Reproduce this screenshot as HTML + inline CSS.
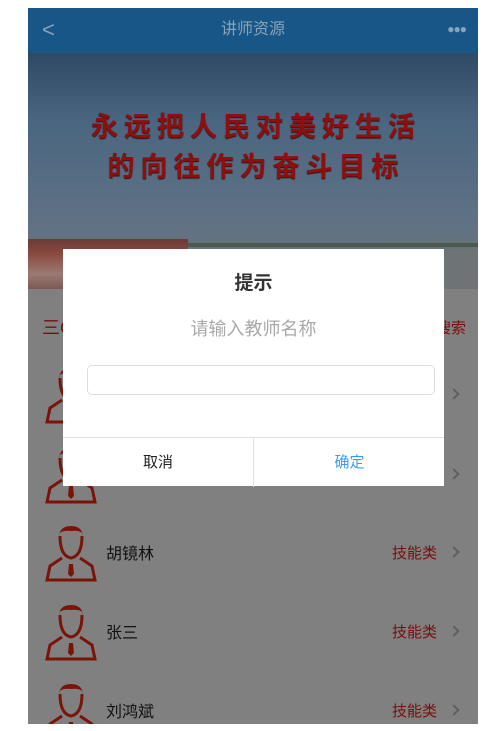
<!DOCTYPE html>
<html><head><meta charset="utf-8"><style>
*{margin:0;padding:0;box-sizing:border-box}
body{width:497px;height:731px;background:#fff;position:relative;overflow:hidden;font-family:"Liberation Sans","Noto Sans CJK SC",sans-serif}
.phone{position:absolute;left:28px;top:8px;width:450px;height:716px;background:#808080;overflow:hidden}
.hdr{position:absolute;left:0;top:0;width:450px;height:45px;background:#175687;color:#8aa3b8;font-size:16px;text-align:center;line-height:43px}
.hdr .b{position:absolute;left:14px;top:0;font-size:22px}
.hdr .m{position:absolute;right:12px;top:0;font-size:12px;letter-spacing:-1px}
.ban{position:absolute;left:0;top:45px;width:450px;height:236px;background:linear-gradient(#2e4a64 0%,#4a6680 30%,#5f7184 70%,#6c7479 100%)}
.slog{position:absolute;left:0;width:450px;text-align:center;color:#8c1010;font-weight:bold;font-size:27px;letter-spacing:6px;text-indent:6px;text-shadow:0 1px 1px #3a0a0a}
.boats{position:absolute;left:0;top:186px;width:160px;height:50px;background:linear-gradient(#6a3a34,#8a4a40 30%,#9a7a72 70%,#7a5a52)}
.row{position:absolute;left:0;width:450px;height:79px}
.row .nm{position:absolute;left:78px;top:22px;font-size:16px;color:#111}
.row .tp{position:absolute;right:41px;top:24px;font-size:15px;color:#7a0d0d}
.row .ar{position:absolute;right:20px;top:30px;width:8px;height:8px;border-top:2px solid #5e5e5e;border-right:2px solid #5e5e5e;transform:rotate(45deg)}
.row svg{position:absolute;left:17px;top:4px}
.dlg{position:absolute;left:63px;top:249px;width:381px;height:237px;background:#fff}
.t{position:absolute;top:19px;width:100%;text-align:center;font-size:19px;color:#333;font-weight:bold}
.ph{position:absolute;top:66px;width:100%;text-align:center;font-size:18px;color:#a8a8a8}
.in{position:absolute;left:24px;top:116px;width:348px;height:30px;border:1px solid #ddd;border-radius:5px}
.btns{position:absolute;left:0;top:188px;width:381px;height:49px;border-top:1px solid #e0e0e0}
.btns div{position:absolute;top:0;height:49px;line-height:50px;text-align:center;font-size:15px;width:191px}
</style></head><body>
<div class="phone">
 <div class="hdr"><span class="b">&lt;</span>讲师资源<span class="m">●●●</span></div>
 <div class="ban">
  <div class="slog" style="top:52px">永远把人民对美好生活</div>
  <div class="slog" style="top:92px">的向往作为奋斗目标</div>
  <div class="boats"></div>
  <div style="position:absolute;left:160px;top:196px;width:290px;height:40px;background:#6e7376"></div>
  <div style="position:absolute;left:160px;top:190px;width:290px;height:4px;background:#4d5a4a"></div>
 </div>
 <div style="position:absolute;left:14px;top:306px;color:#7a0d0d;font-size:18px">三C</div>
 <div style="position:absolute;right:12px;top:309px;color:#7a0d0d;font-size:15px">搜索</div>
 <div id="rows"></div>
</div>
<div class="dlg">
 <div class="t">提示</div>
 <div class="ph">请输入教师名称</div>
 <div class="in"></div>
 <div class="btns"><div style="left:0;color:#222;border-right:1px solid #e0e0e0">取消</div><div style="left:191px;color:#3a9cf0">确定</div></div>
</div>
<script>
var d=[["",""],["",""],["胡镜林","技能类"],["张三","技能类"],["刘鸿斌","技能类"]];
var h="",tops=[352,432,510,589,668];
var svg='<svg width="52" height="60" viewBox="0 0 52 60"><path d="M14 18 Q13 4 26 4 Q39 4 38 18 L38 12 Q35 8 26 9 Q17 8 14 12Z" fill="#7a1408"/><path d="M15 14 Q15 34 26 36 Q37 34 37 14" fill="none" stroke="#7a1408" stroke-width="3"/><path d="M17 36 L5 44 L2 58 L50 58 L47 44 L35 36" fill="none" stroke="#7a1408" stroke-width="3"/><path d="M24 42 L28 42 L29 52 L26 55 L23 52Z" fill="#7a1408"/></svg>';
for(var i=0;i<5;i++){h+='<div class="row" style="top:'+tops[i]+'px">'+svg+'<div class="nm">'+d[i][0]+'</div><div class="tp">'+d[i][1]+'</div><div class="ar"></div></div>';}
document.getElementById("rows").innerHTML=h;
</script>
</body></html>
